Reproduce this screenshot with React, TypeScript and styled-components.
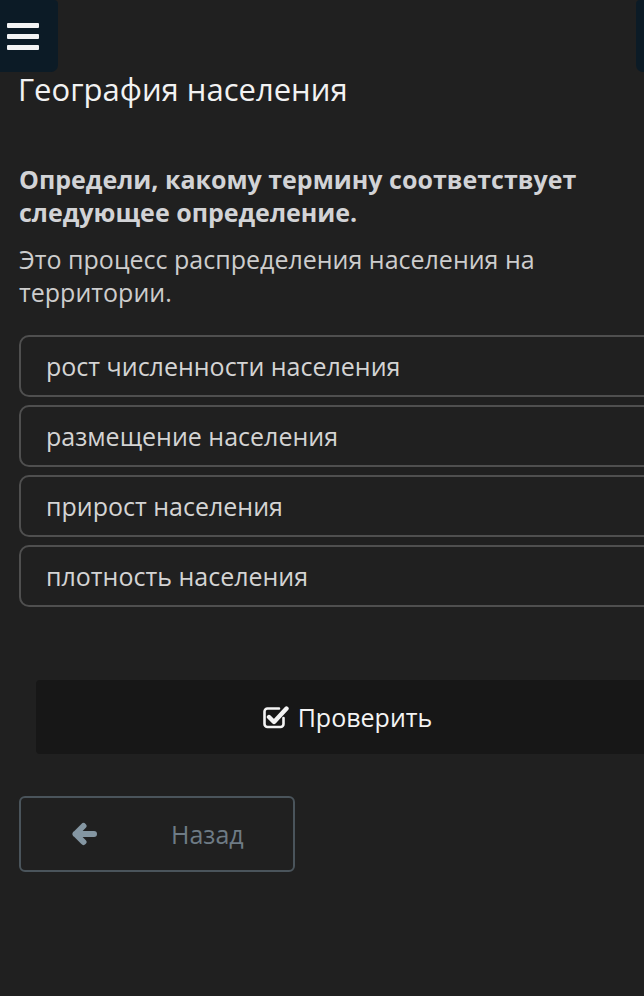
import React from "react";
import styled, { createGlobalStyle } from "styled-components";

const Global = createGlobalStyle`
  html, body {
    margin: 0;
    padding: 0;
    background: #202020;
    overflow: hidden;
  }
  * { box-sizing: border-box; }
`;

const Page = styled.div`
  width: 694px;
  min-height: 996px;
  background: #202020;
  font-family: "Open Sans", "Noto Sans", sans-serif;
  color: #e6e6e6;
`;

const Header = styled.div`
  display: flex;
  justify-content: space-between;
  height: 72px;
`;

const MenuButton = styled.div`
  width: 58px;
  height: 72px;
  background: #0c1b26;
  border-radius: 0 4px 7px 0;
  display: flex;
  flex-direction: column;
  justify-content: center;
  gap: 6px;
  padding-left: 7px;
`;

const RightButton = styled(MenuButton)`
  border-radius: 4px 0 0 7px;
`;

const Line = styled.span`
  display: block;
  width: 32px;
  height: 5px;
  border-radius: 1px;
  background: #f4f4f4;
`;

const Content = styled.div`
  padding: 0 19px;
`;

const Title = styled.h1`
  margin: -2px 0 0 -1px;
  font-size: 31px;
  font-weight: 400;
  line-height: 38px;
  color: #f2f2f2;
`;

const Question = styled.p`
  margin: 55px 0 0;
  font-size: 25px;
  font-weight: 700;
  line-height: 33px;
  color: #d2d3d6;
  max-width: 620px;
`;

const Description = styled.p`
  margin: 14px 0 0;
  font-size: 25px;
  font-weight: 400;
  line-height: 33px;
  color: #cdcdcd;
  max-width: 620px;
`;

const Options = styled.div`
  margin-top: 26px;
  display: flex;
  flex-direction: column;
  gap: 8px;
`;

const Option = styled.div`
  height: 62px;
  border: 2px solid #4f4f4f;
  border-radius: 10px;
  display: flex;
  align-items: center;
  padding-left: 25px;
  font-size: 25px;
  color: #d4d4d4;
`;

const CheckButton = styled.div`
  margin: 73px 17px 0;
  height: 74px;
  background: #171717;
  border-radius: 4px;
  display: flex;
  align-items: center;
  justify-content: center;
  gap: 9px;
  font-size: 25px;
  color: #f4f4f4;
`;

const CheckIcon = styled.svg`
  width: 27px;
  height: 26px;
  margin-top: -3px;
`;

const BackButton = styled.div`
  margin-top: 42px;
  width: 276px;
  height: 76px;
  border: 2px solid #4a545b;
  border-radius: 6px;
  display: flex;
  align-items: center;
  padding-left: 50px;
  font-size: 25px;
  color: #6e7b85;
`;

const ArrowIcon = styled.svg`
  width: 27px;
  height: 24px;
`;

const BackLabel = styled.span`
  margin-left: 73px;
`;

const options = [
  "рост численности населения",
  "размещение населения",
  "прирост населения",
  "плотность населения",
];

export default function App() {
  return (
    <Page>
      <Global />
      <Header>
        <MenuButton>
          <Line />
          <Line />
          <Line />
        </MenuButton>
        <RightButton />
      </Header>
      <Content>
        <Title>География населения</Title>
        <Question>Определи, какому термину соответствует следующее определение.</Question>
        <Description>Это процесс распределения населения на территории.</Description>
        <Options>
          {options.map((o) => (
            <Option key={o}>{o}</Option>
          ))}
        </Options>
        <CheckButton>
          <CheckIcon viewBox="0 0 27 26" fill="none">
            <path
              d="M17 5.5 H5.5 a3 3 0 0 0 -3 3 V21 a3 3 0 0 0 3 3 H18.5 a3 3 0 0 0 3 -3 V15"
              stroke="#f4f4f4"
              strokeWidth="2.6"
              strokeLinecap="round"
            />
            <path
              d="M7 14 L12 19 L24.5 5.5"
              stroke="#f4f4f4"
              strokeWidth="4.4"
              strokeLinecap="round"
              strokeLinejoin="round"
            />
          </CheckIcon>
          <span>Проверить</span>
        </CheckButton>
        <BackButton>
          <ArrowIcon viewBox="0 0 27 24" fill="none">
            <path
              d="M12.5 4 L4.5 12 L12.5 20 M4.5 12 H23"
              stroke="#8496a2"
              strokeWidth="6"
              strokeLinecap="round"
              strokeLinejoin="round"
            />
          </ArrowIcon>
          <BackLabel>Назад</BackLabel>
        </BackButton>
      </Content>
    </Page>
  );
}
